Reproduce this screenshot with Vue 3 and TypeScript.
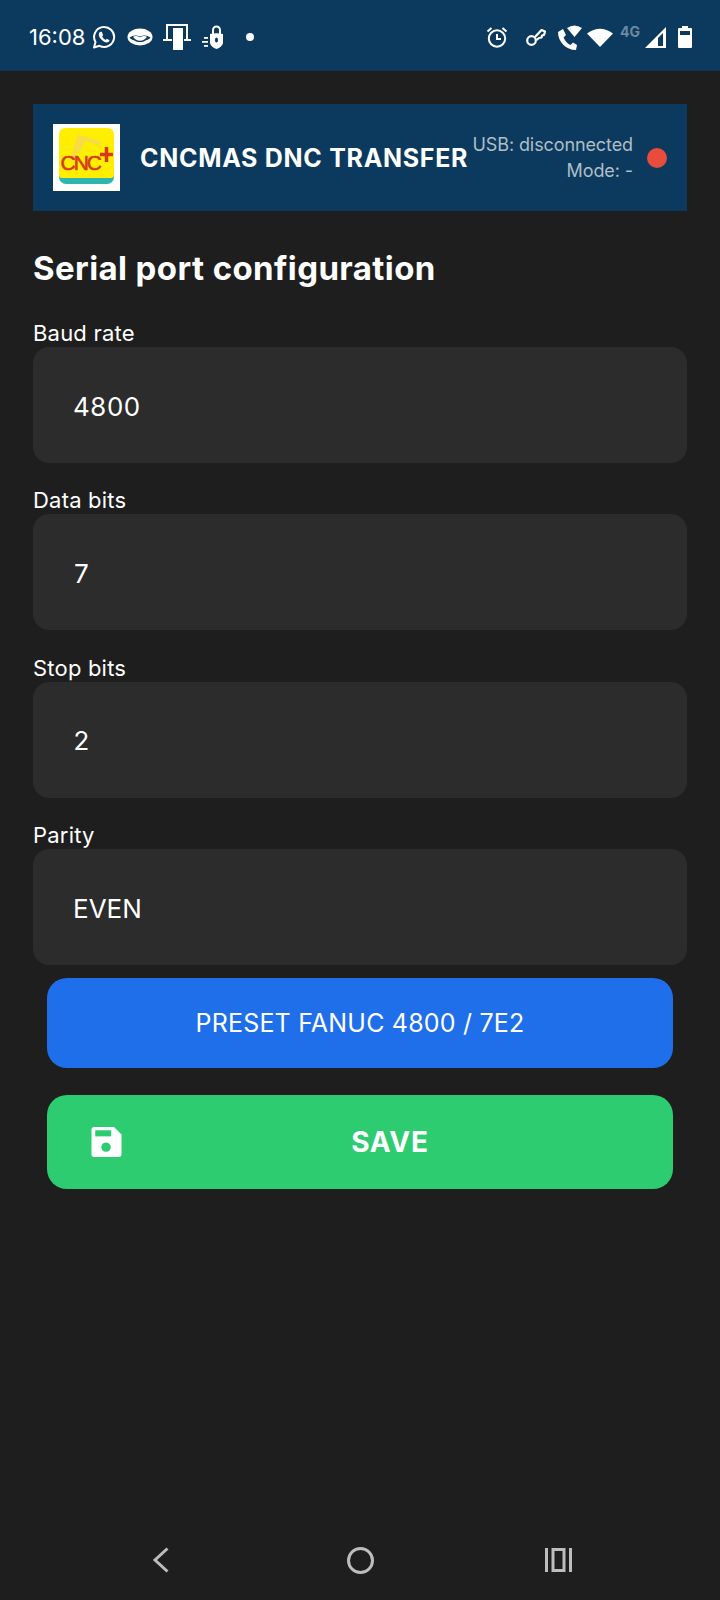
<script setup lang="ts">
interface Field {
  label: string
  value: string
}

const fields: Field[] = [
  { label: 'Baud rate', value: '4800' },
  { label: 'Data bits', value: '7' },
  { label: 'Stop bits', value: '2' },
  { label: 'Parity', value: 'EVEN' }
]
</script>

<template>
  <div class="screen">
    <div class="status-bar">
      <div class="status-left">
        <span class="clock">16:08</span>
        <svg class="whatsapp" viewBox="0 0 24 24" width="24" height="24">
          <path d="M2 22.500l1.500-5.500A10 10 0 1 1 7.500 20.800z" fill="none" stroke="#fff" stroke-width="2" stroke-linejoin="round" />
          <path d="M8.800 6.800c-.8 0-2 1-2 2.700 0 3.300 4.700 8 8 8 1.600 0 2.700-1.100 2.700-2.200l-2.700-1.500-1.100 1.100c-1.400-.5-3.100-2.200-3.600-3.600l1-1.100-1.300-3.400z" fill="#fff" />
        </svg>
        <svg class="mask" viewBox="0 0 26 18" width="26" height="18">
          <ellipse cx="13" cy="9" rx="12.500" ry="8.500" fill="#fff" />
          <path d="M2.500 9.500C6 7.500 8 6.500 13 8.500c5-2 7-1 10.500 1-1 2-5 3-5 3-1.500 1-3.500 1.500-5.500 1.500s-4-.5-5.500-1.500c0 0-4-1-5-3z" fill="#0b3a5e" />
          <path d="M6 8.800C8 7.500 10 7.800 13 9.200c3-1.400 5-1.700 7 -.4-1 2-4 4-7 4s-6-2-7-4z" fill="#fff" />
        </svg>
        <svg class="gate" viewBox="0 0 28 26" width="28" height="26">
          <path d="M3 0h22v15h-2V2H5v13H3z" fill="#fff" />
          <rect x="10" y="4" width="10" height="22" fill="#fff" />
          <rect x="0" y="15" width="9" height="2" fill="#fff" />
          <rect x="21" y="15" width="7" height="2" fill="#fff" />
        </svg>
        <svg class="vpn" viewBox="0 0 24 26" width="24" height="26">
          <path d="M11 10V6a3.500 3.500 0 0 1 7 0v4" fill="none" stroke="#fff" stroke-width="2" />
          <path d="M8 10q6.500-1.500 13 0v9q-1 4-6.500 6Q9 23 8 19z" fill="#fff" />
          <ellipse cx="14.500" cy="16" rx="1.600" ry="2.600" fill="#0b3a5e" />
          <rect x="2" y="13" width="4" height="1.800" fill="#fff" />
          <rect x="0" y="17" width="6" height="1.800" fill="#fff" />
          <rect x="2" y="21" width="4" height="1.800" fill="#fff" />
        </svg>
        <span class="dot"></span>
      </div>
      <div class="status-right">
        <svg viewBox="0 0 24 24" width="24" height="24">
          <circle cx="12" cy="13.500" r="8.200" fill="none" stroke="#fff" stroke-width="2" />
          <path d="M12 9v5h4M2.500 6.500L6.500 3M21.500 6.500L17.500 3" fill="none" stroke="#fff" stroke-width="2" />
        </svg>
        <svg class="key" viewBox="0 0 22 22" width="22" height="22">
          <circle cx="6.500" cy="14.500" r="4.300" fill="none" stroke="#fff" stroke-width="2.200" />
          <path d="M10 11l6.500-7 3.500 1.500-1 3.500-2 .5-.5 2-2.500.5-2.500 2" fill="none" stroke="#fff" stroke-width="2.200" stroke-linejoin="round" />
        </svg>
        <svg class="wificall" viewBox="0 0 26 26" width="26" height="26">
          <path d="M1 8l5-3 3 6-2.500 2.500c1.500 3.500 4.500 6.500 7 7.500l2.500-2.500 4 2.500-1 5C9 26 1 18 1 8z" fill="#fff" />
          <path d="M10 4Q17.500-1 25 4l-7.500 9z" fill="#fff" />
        </svg>
        <svg class="wifi" viewBox="0 0 26 20" width="26" height="20">
          <path d="M0 6.500Q13-3 26 6.500L13 20z" fill="#fff" />
        </svg>
        <span class="net">4G</span>
        <svg class="signal" viewBox="0 0 21 21" width="21" height="21">
          <path d="M21 0v21H0z" fill="#fff" />
          <path d="M13 11l5-5v13h-5z" fill="#0b3a5e" />
        </svg>
        <svg class="battery" viewBox="0 0 14 22" width="14" height="22">
          <path d="M4 0h6v2h3q1 0 1 1v18q0 1-1 1H1q-1 0-1-1V3q0-1 1-1h3z" fill="#fff" />
          <rect x="2" y="5" width="10" height="4" fill="#0b3a5e" />
        </svg>
      </div>
    </div>

    <main class="content">
      <header class="banner">
        <div class="logo">
          <svg viewBox="0 0 67 67" width="67" height="67">
            <rect width="67" height="67" fill="#fff" />
            <rect x="6" y="25" width="55" height="35" rx="7" fill="#2fb5b0" />
            <path d="M13 4h41q7 0 7 7v40q0 3-3 3H9q-3 0-3-3V11q0-7 7-7z" fill="#ffee00" />
            <path d="M20 34L26 13l22 7M30 15l-4 13" fill="none" stroke="#f7dc4a" stroke-width="4" />
            <text x="7.500" y="46" class="logo-text">CNC</text>
            <path d="M47 30.500h13M53.500 23v15" stroke="#d8391a" stroke-width="3.500" fill="none" />
          </svg>
        </div>
        <div class="brand">CNCMAS DNC TRANSFER</div>
        <div class="usb-status">
          <div>USB: disconnected</div>
          <div>Mode: -</div>
        </div>
        <span class="led"></span>
      </header>

      <h1 class="title">Serial port configuration</h1>

      <div v-for="field in fields" :key="field.label" class="field">
        <label class="field-label">{{ field.label }}</label>
        <div class="select">{{ field.value }}</div>
      </div>

      <div class="actions">
        <button class="btn btn-preset">PRESET FANUC 4800 / 7E2</button>
        <button class="btn btn-save">
          <svg class="save-icon" viewBox="0 0 32 32" width="31" height="30">
            <path d="M3 0h21l8 8v21q0 3-3 3H3q-3 0-3-3V3q0-3 3-3z" fill="#fff" />
            <rect x="4" y="3.500" width="17" height="6.500" fill="#2ecc71" />
            <circle cx="15.500" cy="21.500" r="5" fill="#2ecc71" />
          </svg>
          <span>SAVE</span>
        </button>
      </div>
    </main>

    <nav class="nav-bar">
      <svg class="nav-back" viewBox="0 0 17 26" width="17" height="26">
        <path d="M15.500 1.500L3 13l12.500 11.500" fill="none" stroke="#bdbdbd" stroke-width="3" />
      </svg>
      <svg class="nav-home" viewBox="0 0 27 27" width="27" height="27">
        <circle cx="13.500" cy="13.500" r="12" fill="none" stroke="#bdbdbd" stroke-width="3" />
      </svg>
      <svg viewBox="0 0 27 24" width="27" height="24">
        <path d="M1.500 0v24M25.500 0v24" stroke="#bdbdbd" stroke-width="3" />
        <rect x="8" y="1.500" width="11" height="21" fill="none" stroke="#bdbdbd" stroke-width="3" />
      </svg>
    </nav>
  </div>
</template>

<style>
body {
  background: #1e1e1e;
}
</style>

<style scoped>
.screen {
  width: 720px;
  height: 1600px;
  display: flex;
  flex-direction: column;
  background: #1e1e1e;
  color: #fff;
  font-family: Inter, "Open Sans", sans-serif;
  overflow: hidden;
}

.status-bar {
  height: 71px;
  flex-shrink: 0;
  background: #0b3a5e;
  display: flex;
  justify-content: space-between;
  align-items: center;
  padding: 3px 28px 0 29px;
  box-sizing: border-box;
}

.status-left,
.status-right {
  display: flex;
  align-items: center;
}

.clock {
  font-size: 22px;
  width: 63px;
}

.mask {
  margin-left: 11px;
}

.gate {
  margin-left: 10px;
}

.vpn {
  margin-left: 11px;
}

.dot {
  width: 8px;
  height: 8px;
  border-radius: 50%;
  background: #fff;
  margin-left: 20px;
}

.key {
  margin-left: 16px;
}

.wificall {
  margin-left: 10px;
}

.wifi {
  margin-left: 4px;
}

.net {
  font-size: 14px;
  font-weight: 700;
  color: #6c8aa3;
  margin: -11px 0 0 7px;
}

.signal {
  margin-left: 5px;
}

.battery {
  margin-left: 12px;
}

.content {
  flex: 1;
  padding: 33px 33px 0;
}

.banner {
  height: 107px;
  background: #0b3a5e;
  display: flex;
  align-items: center;
  padding: 0 20px;
}

.logo {
  width: 67px;
  height: 67px;
  flex-shrink: 0;
}

.logo svg {
  display: block;
}

.logo-text {
  font-family: "Liberation Sans", sans-serif;
  font-size: 21px;
  fill: #d8391a;
  stroke: #d8391a;
  stroke-width: 0.6px;
  letter-spacing: -2px;
}

.brand {
  margin-left: 20px;
  font-size: 25px;
  font-weight: 700;
  letter-spacing: 0.7px;
  white-space: nowrap;
}

.usb-status {
  flex: 1;
  text-align: right;
  font-size: 18px;
  line-height: 26px;
  letter-spacing: -0.1px;
  color: #b0bec5;
  white-space: nowrap;
}

.led {
  width: 20px;
  height: 20px;
  border-radius: 50%;
  background: #e74c3c;
  margin-left: 14px;
  flex-shrink: 0;
}

.title {
  margin: 35px 0 28px;
  font-size: 33px;
  line-height: 44px;
  font-weight: 700;
  letter-spacing: 0.4px;
}

.field + .field {
  margin-top: 22.4px;
}

.field-label {
  display: block;
  padding-top: 2px;
  font-size: 22px;
  line-height: 27px;
  letter-spacing: 0.2px;
}

.select {
  height: 116px;
  background: #2c2c2c;
  border-radius: 16px;
  display: flex;
  align-items: center;
  padding: 2px 0 0 40px;
  box-sizing: border-box;
  font-size: 26px;
  font-variant-numeric: tabular-nums;
}

.actions {
  padding: 13px 14px 0;
  display: flex;
  flex-direction: column;
  gap: 27px;
}

.btn {
  border: none;
  border-radius: 20px;
  color: #fff;
  font-family: inherit;
  position: relative;
  display: flex;
  align-items: center;
  justify-content: center;
  padding: 0;
}

.btn-preset {
  height: 90px;
  background: #1f6feb;
  font-size: 25px;
  letter-spacing: 0.2px;
}

.btn-save {
  height: 94px;
  background: #2ecc71;
  font-size: 28px;
  font-weight: 700;
  letter-spacing: 0.8px;
  padding-left: 60px;
}

.save-icon {
  position: absolute;
  left: 44px;
  top: 32px;
}

.nav-bar {
  height: 80px;
  flex-shrink: 0;
  display: flex;
  align-items: center;
  padding-left: 152px;
  box-sizing: border-box;
}

.nav-back {
  margin-right: 178px;
}

.nav-home {
  margin-right: 171px;
}
</style>
